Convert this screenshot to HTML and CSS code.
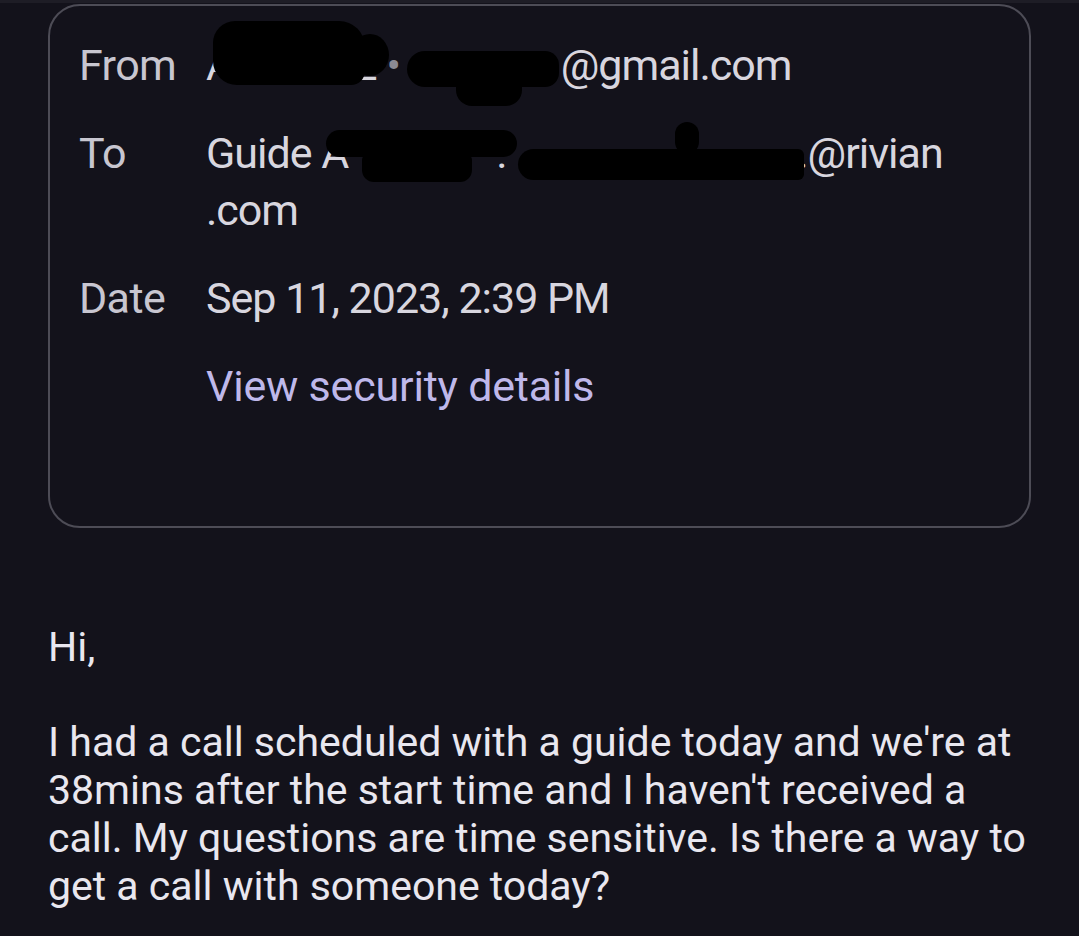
FILE: index.html
```html
<!DOCTYPE html>
<html lang="en">
<head>
<meta charset="utf-8">
<title>Email details</title>
<link rel="stylesheet" href="styles.css">
</head>
<body>
<div class="topbar"></div>
<section class="card">
  <div class="row">
    <div class="label">From</div>
    <div class="value">A<span class="hide s1"><i class="blob f1a"></i><i class="blob f1b"></i></span>Z <span class="sep">•</span> <span class="hide s2"><i class="blob f2a"></i><i class="blob f2b"></i></span>@gmail.com</div>
  </div>
  <div class="row">
    <div class="label">To</div>
    <div class="value">Guide A<span class="hide s3"><i class="blob t1a"></i><i class="blob t1b"></i></span>. <span class="hide s4"><i class="blob t2a"></i><i class="blob t2b"></i></span>.@rivian<br>.com</div>
  </div>
  <div class="row">
    <div class="label">Date</div>
    <div class="value">Sep 11, 2023, 2:39 PM</div>
  </div>
  <div class="row">
    <div class="label"></div>
    <div class="value link">View security details</div>
  </div>
</section>
<div class="body-text">Hi,<br><br>I had a call scheduled with a guide today and we're at 38mins after the start time and I haven't received a call. My questions are time sensitive. Is there a way to get a call with someone today?</div>
</body>
</html>
```
FILE: styles.css
```css
html, body {
  margin: 0;
  padding: 0;
  background: #13121b;
}
body {
  font-family: Roboto, "Liberation Sans", sans-serif;
  width: 1079px;
  height: 936px;
  overflow: hidden;
}
.topbar {
  height: 3px;
  background: #1e1d26;
}
.card {
  margin: 1px 0 0 48px;
  width: 983px;
  height: 524px;
  box-sizing: border-box;
  border: 2px solid #4d4c56;
  border-radius: 32px;
  padding: 31px 0 0 29px;
  display: flex;
  flex-direction: column;
  gap: 31px;
}
.row {
  display: grid;
  grid-template-columns: 127px 1fr;
  font-size: 43px;
  line-height: 57px;
  letter-spacing: -1px;
}
.label {
  color: #c8c6d0;
  letter-spacing: -0.6px;
}
.value {
  color: #d8d6df;
  position: relative;
  white-space: nowrap;
}
.sep {
  color: #8b8a93;
}
.link {
  color: #bfb8ea;
  letter-spacing: -0.2px;
}
.hide {
  display: inline-block;
  position: relative;
  height: 1px;
}
.s1 { width: 119px; }
.s2 { width: 151px; }
.s3 { width: 148px; }
.s4 { width: 281px; }
.blob {
  position: absolute;
  background: #000;
  border-radius: 20px;
}
/* From row blobs: coordinates relative to each redacted span */
.f1a { left: -20px; top: -58px; width: 152px; height: 64px; border-radius: 22px 26px 14px 24px; }
.f1b { left: 118px; top: -45px; width: 38px; height: 42px; border-radius: 50%; }
.f2a { left: -3px; top: -28px; width: 152px; height: 36px; border-radius: 18px 14px 14px 18px; }
.f2b { left: 46px; top: -12px; width: 66px; height: 39px; border-radius: 16px; }
/* To row blobs */
.t1a { left: -22px; top: -37px; width: 191px; height: 27px; border-radius: 14px; }
.t1b { left: 14px; top: -18px; width: 110px; height: 33px; border-radius: 12px; }
.t2a { left: 2px; top: -18px; width: 286px; height: 31px; border-radius: 16px 6px 6px 16px; }
.t2b { left: 159px; top: -45px; width: 24px; height: 32px; border-radius: 12px; }
.body-text {
  margin: 96px 0 0 48px;
  width: 985px;
  font-size: 41px;
  line-height: 47.7px;
  color: #e9e7ef;
}
```
